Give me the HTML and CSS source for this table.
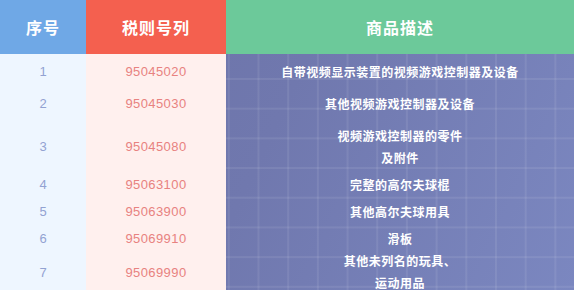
FILE: index.html
```html
<!DOCTYPE html>
<html lang="zh-CN">
<head>
<meta charset="utf-8">
<title>商品描述</title>
<link rel="stylesheet" href="styles.css">
</head>
<body>
<div class="table">
  <div class="thead">
    <div class="th th-seq">序号</div>
    <div class="th th-code">税则号列</div>
    <div class="th th-desc">商品描述</div>
  </div>
  <div class="tbody">
    <div class="td seq">1</div><div class="td code">95045020</div><div class="td desc">自带视频显示装置的视频游戏控制器及设备</div>
    <div class="td seq">2</div><div class="td code">95045030</div><div class="td desc">其他视频游戏控制器及设备</div>
    <div class="td seq">3</div><div class="td code">95045080</div><div class="td desc">视频游戏控制器的零件<br>及附件</div>
    <div class="td seq">4</div><div class="td code">95063100</div><div class="td desc">完整的高尔夫球棍</div>
    <div class="td seq">5</div><div class="td code">95063900</div><div class="td desc">其他高尔夫球用具</div>
    <div class="td seq">6</div><div class="td code">95069910</div><div class="td desc">滑板</div>
    <div class="td seq">7</div><div class="td code">95069990</div><div class="td desc">其他未列名的玩具、<br>运动用品</div>
  </div>
</div>
</body>
</html>
```
FILE: styles.css
```css
html, body {
  margin: 0;
  padding: 0;
  width: 574px;
  height: 290px;
  overflow: hidden;
  font-family: "Liberation Sans", "Noto Sans CJK SC", sans-serif;
}

.table {
  width: 574px;
}

.thead {
  display: grid;
  grid-template-columns: 86px 140px 1fr;
  height: 54px;
}

.th {
  display: flex;
  align-items: center;
  justify-content: center;
  color: #ffffff;
  font-family: "Noto Sans CJK SC", sans-serif;
  font-size: 16px;
  font-weight: 700;
  letter-spacing: 1px;
}

.th-seq { background: #6fa8e6; }
.th-code { background: #f4604f; }
.th-desc { background: #6cc99a; }

.tbody {
  display: grid;
  grid-template-columns: 86px 140px 1fr;
  grid-template-rows: 27px 37px 49px 27px 27px 27px 40px;
  padding-top: 4px;
  height: 236px;
  box-sizing: border-box;
  background:
    linear-gradient(to right, #eef6ff 0 86px, #fff0ee 86px 226px, transparent 226px),
    linear-gradient(to right, rgba(255, 255, 255, 0.08) 0 1.5px, transparent 1.5px) 20px 24px / 29.7px 29.7px,
    linear-gradient(to bottom, rgba(255, 255, 255, 0.08) 0 1.5px, transparent 1.5px) 20px 24px / 29.7px 29.7px,
    linear-gradient(115deg, #6b72a7 0%, #7078ae 45%, #7b87c0 100%);
}

.td {
  display: flex;
  align-items: center;
  justify-content: center;
  text-align: center;
}

.seq {
  color: #92a2d2;
  font-size: 13px;
}

.code {
  color: #e88280;
  font-size: 13px;
  letter-spacing: 0.4px;
}

.desc {
  color: #ffffff;
  font-family: "Noto Sans CJK SC", sans-serif;
  font-size: 12px;
  font-weight: 600;
  letter-spacing: 0.5px;
  line-height: 22px;
}
```
